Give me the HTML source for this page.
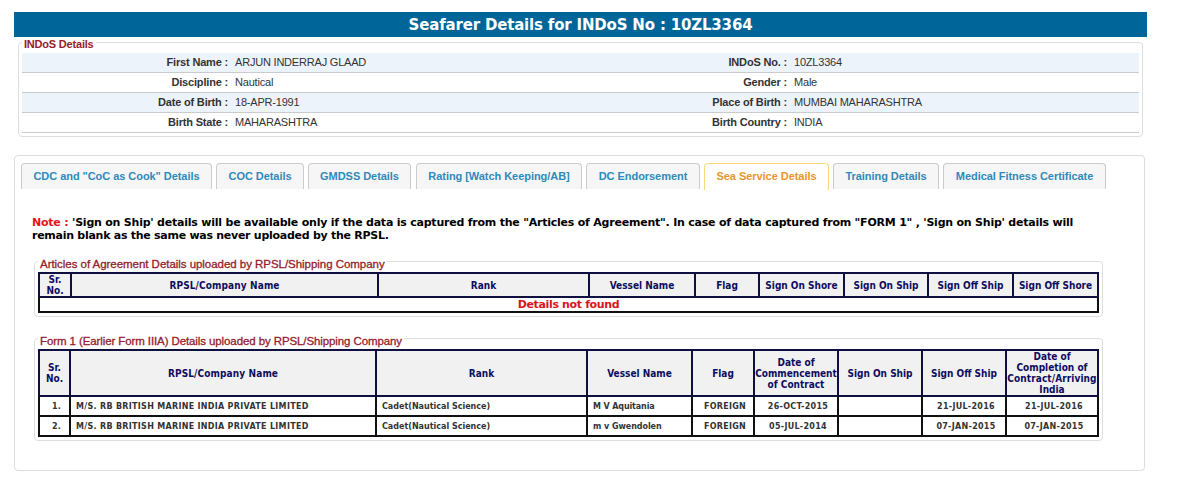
<!DOCTYPE html>
<html>
<head>
<meta charset="utf-8">
<title>Seafarer Details</title>
<style>
html,body{margin:0;padding:0;background:#fff;}
body{width:1184px;height:491px;position:relative;overflow:hidden;font-family:"Liberation Sans",Arial,sans-serif;font-size:11px;color:#333;}
.abs{position:absolute;box-sizing:border-box;}
.vd{font-family:"DejaVu Sans",Verdana,sans-serif;font-weight:bold;}
#title{left:14px;top:12px;width:1133px;height:25px;background:#006699;color:#fff;font-size:15px;line-height:26px;text-align:center;white-space:nowrap;letter-spacing:-0.18px;}
.fs{border:1px solid #dcdfe2;border-radius:4px;}
.legend{position:absolute;background:#fff;color:#95202a;white-space:nowrap;line-height:13px;padding:0 2px;}
#indos{left:18px;top:42px;width:1125px;height:95px;}
#indos table{position:absolute;left:3px;top:10px;width:1117px;border-collapse:collapse;table-layout:fixed;}
#indos td{height:19px;padding:0 0 0 6px;border-bottom:1px solid #c8ccd0;font-size:11px;line-height:19px;white-space:nowrap;color:#333;letter-spacing:-0.2px;}
#indos tr.a td{background:#edf3fb;}
#indos td.l{text-align:right;font-weight:bold;padding:0 1px 0 0;letter-spacing:-0.18px;}
#tabs{left:14px;top:155px;width:1131px;height:316px;border:1px solid #dddddd;border-radius:4px;}
.tab{letter-spacing:-0.05px;position:absolute;top:163px;height:26px;box-sizing:border-box;border:1px solid #cbcbcb;border-bottom:none;border-radius:4px 4px 0 0;background:#f6f6f6;color:#3089bb;font-weight:bold;font-size:11px;line-height:25px;text-align:center;white-space:nowrap;}
.tab.on{background:#fff;color:#e6952f;border-color:#f9d97e;height:27px;}
#note{left:32px;top:216px;width:1100px;font-size:11px;line-height:13px;color:#000;letter-spacing:-0.22px;}
#note b{color:#e3141b;}
table.g{position:absolute;border-collapse:separate;border-spacing:0;table-layout:fixed;border-bottom:2px solid #111;}
table.g th:last-child{border-right:2px solid #0f1040;}
table.g td:last-child{border-right:2px solid #111;}
table.g th{box-sizing:border-box;border-left:2px solid #0f1040;border-top:2px solid #0f1040;background:#f1f1f1;color:#0d0d60;font-family:"DejaVu Sans Condensed","DejaVu Sans",Verdana,sans-serif;font-size:10px;line-height:11px;padding:0;text-align:center;font-weight:bold;white-space:nowrap;}
table.g td{box-sizing:border-box;border-left:2px solid #111;border-top:2px solid #111;background:#fff;color:#333;font-size:8px;line-height:10px;padding:2px 0 0 5px;text-align:left;white-space:nowrap;font-weight:bold;letter-spacing:0.3px;}
table.g tr:nth-child(2) td{border-top-color:#0f1040;}
table.g td.c{text-align:center;padding:2px 0 0 4px;}
table.g td.m{letter-spacing:0;}
</style>
</head>
<body>
<div id="title" class="abs vd">Seafarer Details for INDoS No : 10ZL3364</div>

<div id="indos" class="abs fs">
  <div class="legend" style="left:3px;top:-5px;font-weight:bold;font-size:11px;letter-spacing:-0.2px;">INDoS Details</div>
  <table>
    <colgroup><col style="width:207px"><col style="width:352px"><col style="width:207px"><col></colgroup>
    <tr class="a"><td class="l">First Name :</td><td>ARJUN INDERRAJ GLAAD</td><td class="l">INDoS No. :</td><td>10ZL3364</td></tr>
    <tr><td class="l">Discipline :</td><td>Nautical</td><td class="l">Gender :</td><td>Male</td></tr>
    <tr class="a"><td class="l">Date of Birth :</td><td>18-APR-1991</td><td class="l">Place of Birth :</td><td>MUMBAI MAHARASHTRA</td></tr>
    <tr><td class="l">Birth State :</td><td>MAHARASHTRA</td><td class="l">Birth Country :</td><td>INDIA</td></tr>
  </table>
</div>

<div id="tabs" class="abs"></div>
<div class="tab" style="left:21px;width:191px;">CDC and "CoC as Cook" Details</div>
<div class="tab" style="left:216px;width:88px;">COC Details</div>
<div class="tab" style="left:308px;width:103px;">GMDSS Details</div>
<div class="tab" style="left:416px;width:166px;">Rating [Watch Keeping/AB]</div>
<div class="tab" style="left:586px;width:114px;">DC Endorsement</div>
<div class="tab on" style="left:704px;width:125px;">Sea Service Details</div>
<div class="tab" style="left:833px;width:106px;">Training Details</div>
<div class="tab" style="left:943px;width:163px;">Medical Fitness Certificate</div>

<div id="note" class="abs vd"><b>Note :</b> 'Sign on Ship' details will be available only if the data is captured from the "Articles of Agreement". In case of data captured from "FORM 1" , 'Sign on Ship' details will<br><span style="letter-spacing:-0.27px">remain blank as the same was never uploaded by the RPSL.</span></div>

<div class="abs fs" style="left:34px;top:261px;width:1069px;height:56px;">
  <div class="legend" style="left:3px;top:-4px;font-size:11.5px;letter-spacing:-0.04px;-webkit-text-stroke:0.3px #95202a;">Articles of Agreement Details uploaded by RPSL/Shipping Company</div>
</div>
<table class="g vd" style="left:38px;top:272px;width:1061px;">
  <colgroup><col style="width:32px"><col style="width:307px"><col style="width:211px"><col style="width:106px"><col style="width:64px"><col style="width:85px"><col style="width:84px"><col style="width:85px"><col style="width:87px"></colgroup>
  <tr style="height:24px"><th>Sr.<br>No.</th><th style="letter-spacing:0.12px">RPSL/Company Name</th><th>Rank</th><th>Vessel Name</th><th>Flag</th><th>Sign On Shore</th><th>Sign On Ship</th><th>Sign Off Ship</th><th>Sign Off Shore</th></tr>
  <tr style="height:15px"><td colspan="9" class="c" style="color:#d9141b;font-size:11px;line-height:12px;letter-spacing:-0.35px;padding:1px 0 0 0;">Details not found</td></tr>
</table>

<div class="abs fs" style="left:34px;top:338px;width:1069px;height:103px;">
  <div class="legend" style="left:3px;top:-4px;font-size:11.5px;letter-spacing:-0.1px;-webkit-text-stroke:0.3px #95202a;">Form 1 (Earlier Form IIIA) Details uploaded by RPSL/Shipping Company</div>
</div>
<table class="g vd" style="left:38px;top:349px;width:1061px;">
  <colgroup><col style="width:31px"><col style="width:306px"><col style="width:211px"><col style="width:105px"><col style="width:62px"><col style="width:84px"><col style="width:84px"><col style="width:84px"><col style="width:94px"></colgroup>
  <tr style="height:46px"><th>Sr.<br>No.</th><th style="letter-spacing:0.12px">RPSL/Company Name</th><th>Rank</th><th>Vessel Name</th><th>Flag</th><th>Date of<br>Commencement<br>of Contract</th><th>Sign On Ship</th><th>Sign Off Ship</th><th>Date of<br>Completion of<br><span style="letter-spacing:0.1px">Contract/Arriving</span><br>India</th></tr>
  <tr style="height:20px"><td class="c">1.</td><td>M/S. RB BRITISH MARINE INDIA PRIVATE LIMITED</td><td class="m">Cadet(Nautical Science)</td><td class="m" style="letter-spacing:-0.12px">M V Aquitania</td><td class="c">FOREIGN</td><td class="c">26-OCT-2015</td><td class="c"></td><td class="c">21-JUL-2016</td><td class="c">21-JUL-2016</td></tr>
  <tr style="height:20px"><td class="c">2.</td><td>M/S. RB BRITISH MARINE INDIA PRIVATE LIMITED</td><td class="m">Cadet(Nautical Science)</td><td class="m" style="letter-spacing:-0.05px">m v Gwendolen</td><td class="c">FOREIGN</td><td class="c">05-JUL-2014</td><td class="c"></td><td class="c">07-JAN-2015</td><td class="c">07-JAN-2015</td></tr>
</table>
</body>
</html>
